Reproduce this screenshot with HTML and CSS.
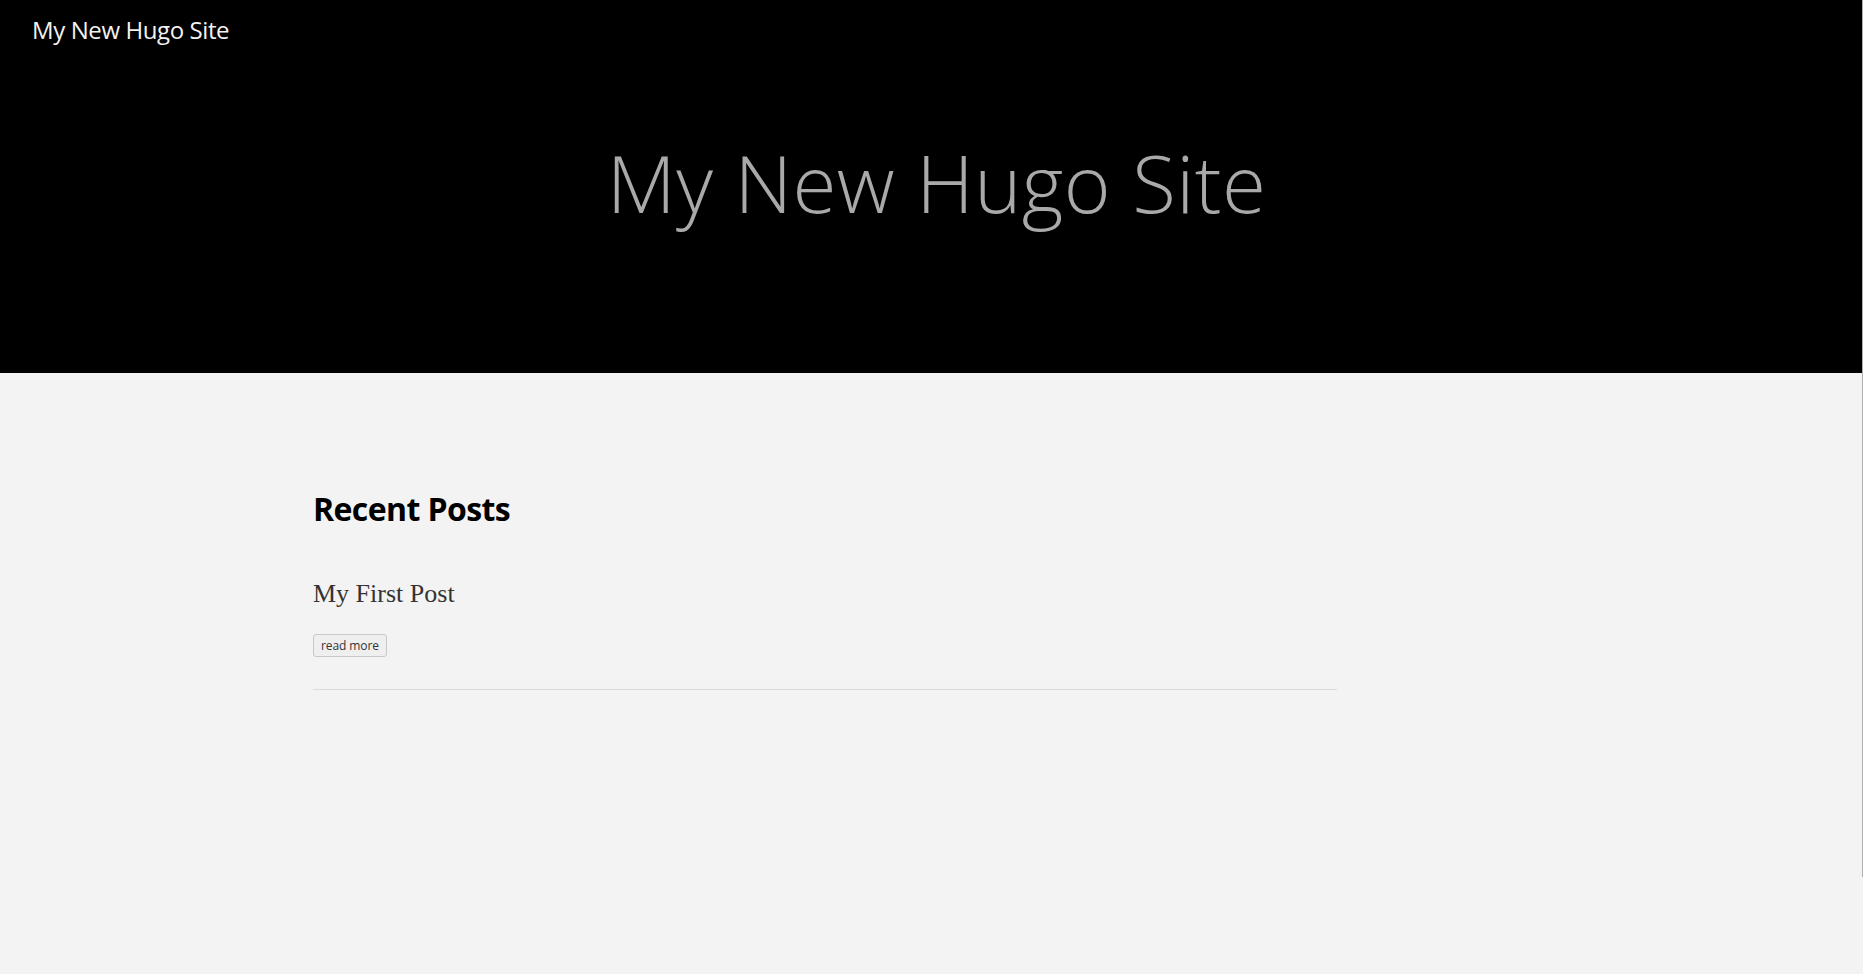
FILE: index.html
```html
<!DOCTYPE html>
<html lang="en">
<head>
<meta charset="utf-8">
<title>My New Hugo Site</title>
<link rel="stylesheet" href="styles.css">
</head>
<body>
<header class="hero">
  <nav class="topbar">
    <a class="brand" href="#">My New Hugo Site</a>
  </nav>
  <h1 class="hero-title">My New Hugo Site</h1>
</header>
<main class="content">
  <section class="posts">
    <h2 class="posts-heading">Recent Posts</h2>
    <article class="post">
      <h3 class="post-title">My First Post</h3>
      <a class="read-more" href="#">read more</a>
    </article>
  </section>
</main>
<div class="edge-line"></div>
</body>
</html>
```

FILE: styles.css
```css
html, body {
  margin: 0;
  padding: 0;
}
body {
  background: #f3f3f3;
  font-family: "Open Sans", "Noto Sans", sans-serif;
  min-height: 974px;
  overflow: hidden;
}
.hero {
  background: #000;
  height: 373px;
  box-sizing: border-box;
  display: flex;
  flex-direction: column;
}
.topbar {
  padding: 14px 32px 0;
}
.brand {
  color: #f2f2f2;
  text-decoration: none;
  font-size: 24px;
  line-height: 32px;
  font-weight: 400;
  letter-spacing: -0.4px;
}
.hero-title {
  margin: 96px 0 0;
  padding-left: 10px;
  text-align: center;
  color: #a9a9a9;
  font-weight: 300;
  font-size: 80px;
  line-height: 80px;
  letter-spacing: 0.4px;
}
.content {
  padding: 116px 0 0 313px;
}
.posts {
  width: 1024px;
}
.posts-heading {
  margin: 0;
  font-size: 32px;
  line-height: 40px;
  font-weight: 700;
  color: #000;
  letter-spacing: -0.6px;
}
.post {
  margin-top: 50px;
  padding-bottom: 32px;
  border-bottom: 1px solid #dcdcdc;
}
.post-title {
  margin: 0;
  font-family: "Liberation Serif", "Times New Roman", serif;
  font-weight: 400;
  font-size: 26px;
  line-height: 30px;
  color: #333;
}
.read-more {
  display: inline-block;
  margin-top: 25px;
  box-sizing: border-box;
  height: 23px;
  padding: 0 7px;
  border: 1px solid #c8c8c8;
  border-radius: 3px;
  background: #efefef;
  color: #333;
  font-size: 12px;
  line-height: 21px;
  letter-spacing: -0.1px;
  text-decoration: none;
  vertical-align: top;
}
.edge-line {
  position: absolute;
  top: 0;
  right: 0;
  width: 1px;
  height: 877px;
  background: #b0b0b0;
}
```
